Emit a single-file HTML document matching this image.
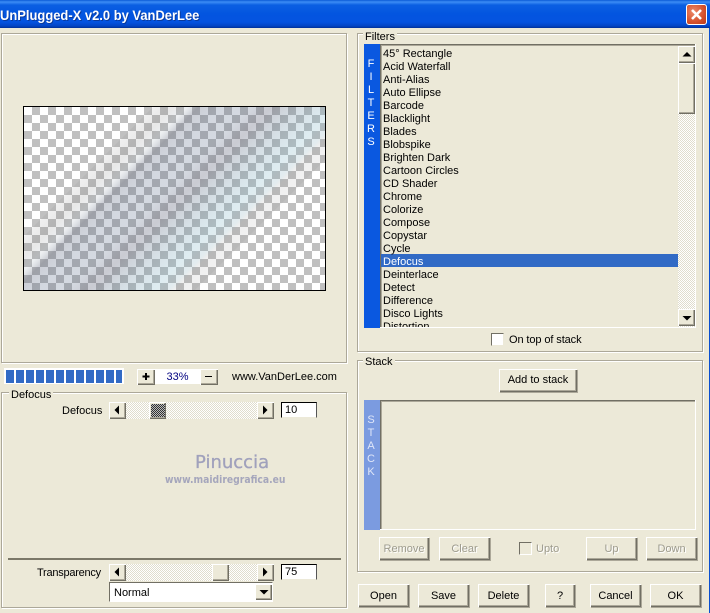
<!DOCTYPE html>
<html><head><meta charset="utf-8"><style>
html,body{margin:0;padding:0}
body{width:710px;height:613px;overflow:hidden;position:relative;background:#ece9d8;font:11px/13px "Liberation Sans",sans-serif;color:#000}
div,span.a{position:absolute;box-sizing:border-box}
.t{white-space:nowrap}
.g{border:1px solid #aca899;box-shadow:inset 1px 1px 0 #fff,1px 1px 0 #fff}
.lg{background:#ece9d8;padding:0 2px;height:13px}
.b{background:#ece9d8;box-shadow:inset 1px 1px 0 #fff,inset -1px -1px 0 #716f64,inset -2px -2px 0 #aca899;text-align:center}
.bb{line-height:24px;background:#ece9d8;box-shadow:inset 1px 1px 0 #fff,inset -1px -1px 0 #716f64,inset -2px -2px 0 #aca899,1px 1px 0 #aca899;text-align:center}
.dis{color:#9d9b8d;text-shadow:1px 1px 0 #fff}
.d{background:repeating-conic-gradient(#fff 0 25%,#e0ddcd 0 50%) 0 0/2px 2px}
.e{background:#fff;border-left:1px solid #000;border-top:1px solid #000;border-right:1px solid #555;border-bottom:1px solid #ece9d8;padding-left:3px;line-height:15px}
.r{white-space:nowrap;height:13px}
svg{position:absolute;left:0;top:0}
</style></head><body>
<div style="left:0;top:0;width:710px;height:28px;background:linear-gradient(#0a5ad6 0,#3c8cf5 2px,#0b5fe2 5px,#0355e0 14px,#0453e0 22px,#0345c4 26px,#01309a 28px)"></div>
<div class="t" style="left:0;top:6px;font:bold 14px/18px 'Liberation Sans',sans-serif;color:#fff;text-shadow:1px 1px 0 #0a3a9c;transform:scaleX(.925);transform-origin:0 0">UnPlugged-X v2.0 by VanDerLee</div>
<div style="left:686px;top:4px;width:21px;height:21px;border:1px solid #fff;border-radius:3px;background:radial-gradient(circle at 35% 35%,#ec8a6a,#d5512c 60%,#b83a1a)"></div>
<svg width="710" height="30" style="left:0;top:0"><path d="M692 10 L701 19 M701 10 L692 19" stroke="#fff" stroke-width="2.6" fill="none"/></svg>
<div style="left:709px;top:28px;width:1px;height:585px;background:#0a4fd0"></div>

<!-- left preview group -->
<div class="g" style="left:1px;top:33px;width:346px;height:330px"></div>
<div style="left:23px;top:106px;width:303px;height:185px;border:1px solid #000;background:repeating-conic-gradient(#c0c0c0 0 25%,#fff 0 50%) 0 0/16px 16px">
<svg width="301" height="183" viewBox="24 107 301 183" style="left:0;top:0">
<defs><linearGradient id="bd" gradientUnits="userSpaceOnUse" x1="110" y1="150" x2="224" y2="264">
<stop offset="0" stop-color="#808080" stop-opacity=".12"/>
<stop offset=".09" stop-color="#707070" stop-opacity=".16"/>
<stop offset=".15" stop-color="#8090a0" stop-opacity=".14"/>
<stop offset=".2" stop-color="#47506a" stop-opacity=".28"/>
<stop offset=".3" stop-color="#485c7d" stop-opacity=".24"/>
<stop offset=".42" stop-color="#485c7d" stop-opacity=".23"/>
<stop offset=".52" stop-color="#474a64" stop-opacity=".29"/>
<stop offset=".66" stop-color="#5a8098" stop-opacity=".25"/>
<stop offset=".8" stop-color="#74b0c4" stop-opacity=".24"/>
<stop offset=".87" stop-color="#74a0b0" stop-opacity=".2"/>
<stop offset=".9" stop-color="#808080" stop-opacity=".12"/>
<stop offset="1" stop-color="#808080" stop-opacity=".1"/>
</linearGradient></defs>
<polygon points="24,236 153,107 325,107 325,160 195,290 24,290" fill="url(#bd)"/>
</svg></div>

<!-- progress / zoom -->
<div style="left:4px;top:368px;width:120px;height:16px;background:#fff"></div>
<svg width="130" height="390" style="left:0;top:0"><g fill="#316ac5">
<rect x="6" y="370" width="8" height="13"/><rect x="16" y="370" width="8" height="13"/><rect x="26" y="370" width="8" height="13"/><rect x="36" y="370" width="8" height="13"/><rect x="46" y="370" width="8" height="13"/><rect x="56" y="370" width="8" height="13"/><rect x="66" y="370" width="8" height="13"/><rect x="76" y="370" width="8" height="13"/><rect x="86" y="370" width="8" height="13"/><rect x="96" y="370" width="8" height="13"/><rect x="106" y="370" width="8" height="13"/><rect x="116" y="370" width="6" height="13"/></g></svg>
<div class="b" style="left:137px;top:369px;width:18px;height:16px"></div>
<div style="left:155px;top:369px;width:45px;height:15px;background:#fff;color:#000080;text-align:center;line-height:16px">33%</div>
<div class="b" style="left:200px;top:369px;width:18px;height:16px"></div>
<svg width="230" height="390" style="left:0;top:0"><path d="M146 373v7M142.500 376.500h7" stroke="#000" stroke-width="2" fill="none"/><path d="M205 376.500h7" stroke="#000" stroke-width="1" fill="none"/></svg>
<div class="t" style="left:232px;top:371px">www.VanDerLee.com</div>

<!-- defocus group -->
<div class="g" style="left:1px;top:392px;width:346px;height:216px"></div>
<div class="lg t" style="left:9px;top:389px">Defocus</div>
<div class="t" style="left:62px;top:405px">Defocus</div>
<div class="d" style="left:126px;top:402px;width:132px;height:17px"></div>
<div class="b" style="left:109px;top:402px;width:17px;height:17px"></div>
<div class="b" style="left:149px;top:402px;width:17px;height:17px;"></div>
<div style="left:151px;top:404px;width:14px;height:13px;background:repeating-conic-gradient(#333 0 25%,#bbb 0 50%) 0 0/2px 2px"></div>
<div class="b" style="left:257px;top:402px;width:17px;height:17px"></div>
<div class="e" style="left:281px;top:402px;width:36px;height:16px">10</div>
<div class="t" style="left:195px;top:453px;font:18px/20px 'DejaVu Sans',sans-serif;color:#a0a1bc;-webkit-text-stroke:.3px #a0a1bc">Pinuccia</div>
<div class="t" style="left:165px;top:474px;font:bold 10.500px/13px 'DejaVu Sans',sans-serif;color:#a5a6bc;transform:scaleX(.88);transform-origin:0 0">www.maidiregrafica.eu</div>
<div style="left:8px;top:558px;width:333px;height:2px;background:#7b7868"></div>
<div class="t" style="left:37px;top:567px;letter-spacing:-.25px">Transparency</div>
<div class="d" style="left:126px;top:564px;width:132px;height:17px"></div>
<div class="b" style="left:109px;top:564px;width:17px;height:17px"></div>
<div class="b" style="left:212px;top:564px;width:17px;height:17px"></div>
<div class="b" style="left:257px;top:564px;width:17px;height:17px"></div>
<div class="e" style="left:281px;top:564px;width:36px;height:16px">75</div>
<div class="e" style="left:109px;top:582px;width:164px;height:20px;padding:4px 0 0 4px;line-height:13px;border-bottom:1px solid #fff;border-right:1px solid #fff;border-left:1px solid #716f64;border-top:1px solid #716f64">Normal</div>
<div class="b" style="left:255px;top:584px;width:17px;height:16px"></div>
<svg width="280" height="613" style="left:0;top:0"><g fill="#000">
<path d="M119 405.500v9l-4.500-4.500z"/><path d="M263 405.500v9l4.500-4.500z"/>
<path d="M119 567.500v9l-4.500-4.500z"/><path d="M263 567.500v9l4.500-4.500z"/>
<path d="M259.500 590h9l-4.500 4.500z"/></g></svg>

<!-- filters group -->
<div class="g" style="left:357px;top:33px;width:346px;height:319px"></div>
<div class="lg t" style="left:363px;top:31px">Filters</div>
<div style="left:364px;top:44px;width:16px;height:284px;background:#0a58e0"></div>
<div style="left:364px;top:58px;width:14px;height:100px;color:#fff;text-align:center;line-height:13px">F<br>I<br>L<br>T<br>E<br>R<br>S</div>
<div style="left:380px;top:44px;width:316px;height:284px;background:#ece9d8;box-shadow:inset 1px 1px 0 #716f64,inset 2px 2px 0 #aca899;border-right:1px solid #fff;border-bottom:1px solid #fff;overflow:hidden"></div>
<div style="left:381px;top:254px;width:297px;height:13px;background:#316ac5"></div>
<div style="left:381px;top:48px;width:297px;height:279px;overflow:hidden">
<div class="r" style="left:2px;top:0">45° Rectangle</div>
<div class="r" style="left:2px;top:13px">Acid Waterfall</div>
<div class="r" style="left:2px;top:26px">Anti-Alias</div>
<div class="r" style="left:2px;top:39px">Auto Ellipse</div>
<div class="r" style="left:2px;top:52px">Barcode</div>
<div class="r" style="left:2px;top:65px">Blacklight</div>
<div class="r" style="left:2px;top:78px">Blades</div>
<div class="r" style="left:2px;top:91px">Blobspike</div>
<div class="r" style="left:2px;top:104px">Brighten Dark</div>
<div class="r" style="left:2px;top:117px">Cartoon Circles</div>
<div class="r" style="left:2px;top:130px">CD Shader</div>
<div class="r" style="left:2px;top:143px">Chrome</div>
<div class="r" style="left:2px;top:156px">Colorize</div>
<div class="r" style="left:2px;top:169px">Compose</div>
<div class="r" style="left:2px;top:182px">Copystar</div>
<div class="r" style="left:2px;top:195px">Cycle</div>
<div class="r" style="left:2px;top:208px;color:#fff">Defocus</div>
<div class="r" style="left:2px;top:221px">Deinterlace</div>
<div class="r" style="left:2px;top:234px">Detect</div>
<div class="r" style="left:2px;top:247px">Difference</div>
<div class="r" style="left:2px;top:260px">Disco Lights</div>
<div class="r" style="left:2px;top:273px">Distortion</div>
</div>
<div class="d" style="left:678px;top:62px;width:17px;height:265px"></div>
<div class="b" style="left:678px;top:46px;width:17px;height:17px"></div>
<div class="b" style="left:678px;top:63px;width:17px;height:51px"></div>
<div class="b" style="left:678px;top:309px;width:17px;height:17px"></div>
<svg width="700" height="330" style="left:0;top:0"><path d="M682.500 56.500h9l-4.500-4.500z"/><path d="M682.500 316h9l-4.500 4.500z"/></svg>
<div style="left:491px;top:333px;width:13px;height:13px;background:#fff;border-left:1px solid #716f64;border-top:1px solid #716f64;border-right:1px solid #ece9d8;border-bottom:1px solid #ece9d8"></div>
<div class="t" style="left:509px;top:334px;letter-spacing:-.1px">On top of stack</div>

<!-- stack group -->
<div class="g" style="left:357px;top:360px;width:346px;height:212px"></div>
<div class="lg t" style="left:363px;top:356px">Stack</div>
<div class="bb" style="left:499px;top:369px;width:78px;height:23px;line-height:22px">Add to stack</div>
<div style="left:364px;top:400px;width:16px;height:130px;background:#7b9be0"></div>
<div style="left:364px;top:414px;width:14px;height:70px;color:#dfe6f8;text-align:center;line-height:13px">S<br>T<br>A<br>C<br>K</div>
<div style="left:380px;top:400px;width:316px;height:130px;background:#ece9d8;box-shadow:inset 1px 1px 0 #716f64,inset 2px 2px 0 #aca899;border-right:1px solid #fff;border-bottom:1px solid #fff"></div>
<div class="bb dis" style="left:379px;top:537px;width:50px;height:23px">Remove</div>
<div class="bb dis" style="left:439px;top:537px;width:51px;height:23px">Clear</div>
<div style="left:519px;top:542px;width:13px;height:13px;background:#ece9d8;border-left:1px solid #716f64;border-top:1px solid #716f64;border-right:1px solid #fff;border-bottom:1px solid #fff"></div>
<div class="t dis" style="left:536px;top:543px">Upto</div>
<div class="bb dis" style="left:586px;top:537px;width:51px;height:23px">Up</div>
<div class="bb dis" style="left:646px;top:537px;width:51px;height:23px">Down</div>

<!-- bottom buttons -->
<div class="bb" style="left:358px;top:584px;width:51px;height:23px">Open</div>
<div class="bb" style="left:418px;top:584px;width:51px;height:23px">Save</div>
<div class="bb" style="left:478px;top:584px;width:51px;height:23px">Delete</div>
<div class="bb" style="left:545px;top:584px;width:30px;height:23px">?</div>
<div class="bb" style="left:590px;top:584px;width:51px;height:23px">Cancel</div>
<div class="bb" style="left:650px;top:584px;width:51px;height:23px">OK</div>
</body></html>
